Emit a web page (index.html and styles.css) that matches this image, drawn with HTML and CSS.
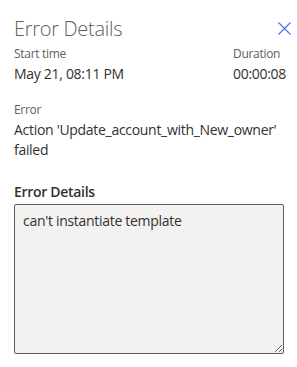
FILE: index.html
```html
<!DOCTYPE html>
<html>
<head>
<meta charset="utf-8">
<link rel="stylesheet" href="styles.css">
</head>
<body>
<div class="panel">
  <div class="header">
    <h1 class="title">Error Details</h1>
    <button class="close" aria-label="Close">
      <svg width="13" height="13" viewBox="0 0 13 13"><path d="M0.5 0.5 L12.5 12.5 M12.5 0.5 L0.5 12.5" stroke="#4f6bf0" stroke-width="1.1" fill="none"/></svg>
    </button>
  </div>
  <div class="meta">
    <div class="col">
      <div class="label">Start time</div>
      <div class="value">May 21, 08:11 PM</div>
    </div>
    <div class="col right">
      <div class="label">Duration</div>
      <div class="value">00:00:08</div>
    </div>
  </div>
  <div class="error">
    <div class="label">Error</div>
    <div class="value msg">Action 'Update_account_with_New_owner' failed</div>
  </div>
  <div class="details">
    <div class="field-label">Error Details</div>
    <textarea class="box" readonly>can't instantiate template</textarea>
  </div>
</div>
</body>
</html>
```
FILE: styles.css
```css
* { box-sizing: border-box; }
body {
  margin: 0;
  background: #fff;
  font-family: "Segoe UI", "Open Sans", "Noto Sans", sans-serif;
  color: #323130;
  letter-spacing: -0.3px;
}
.panel {
  width: 297px;
  padding: 15px 13px 0 14px;
}
.header {
  display: flex;
  justify-content: space-between;
  align-items: flex-start;
}
.title {
  margin: 0;
  font-size: 20px;
  font-weight: 300;
  line-height: 28px;
  color: #605e5c;
}
.close {
  border: 0;
  background: none;
  padding: 0;
  margin: 7px -7px 0 0;
  width: 13px;
  height: 13px;
  display: flex;
}
.meta {
  display: flex;
  justify-content: space-between;
  margin-top: 3px;
}
.col.right { width: 51px; }
.label {
  font-size: 12px;
  line-height: 16px;
  color: #605e5c;
}
.value {
  font-size: 14px;
  line-height: 20px;
  margin-top: 2px;
}
.error { margin-top: 18px; }
.msg { margin-top: 2px; }
.details { margin-top: 22px; }
.field-label {
  font-size: 14px;
  font-weight: 600;
  line-height: 20px;
}
.box {
  display: block;
  width: 270px;
  height: 150px;
  margin-top: 2px;
  background: #f3f2f1;
  border: 1px solid #605e5c;
  border-radius: 2px;
  padding: 6px 8px;
  font-family: inherit;
  font-size: 14px;
  letter-spacing: -0.3px;
  color: #323130;
  resize: vertical;
}
```
